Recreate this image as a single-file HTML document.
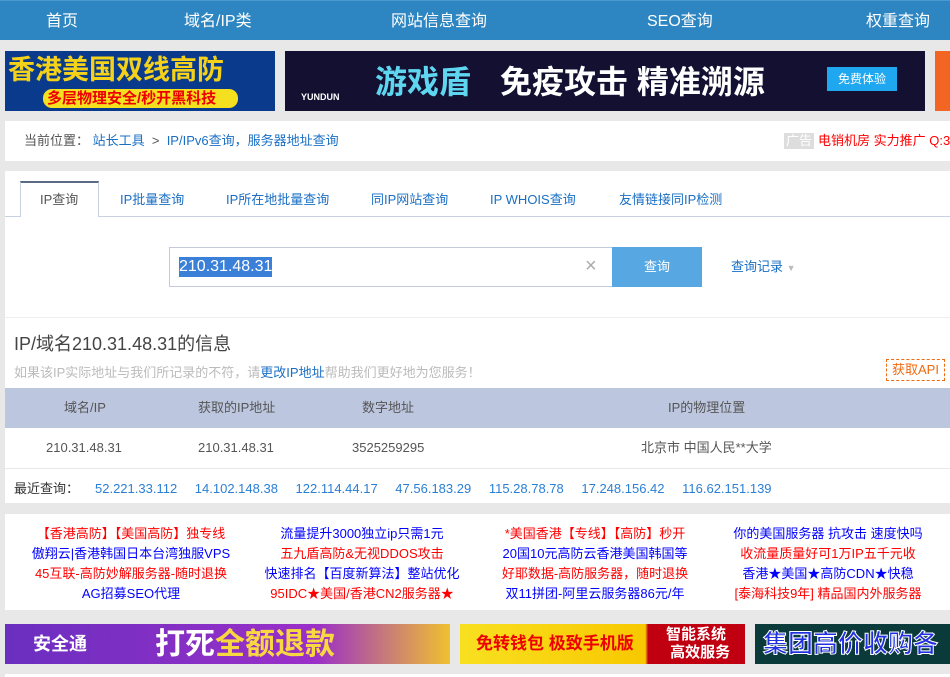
<!DOCTYPE html>
<html><head><meta charset="utf-8"><style>
*{margin:0;padding:0;box-sizing:border-box}
body{width:950px;height:677px;overflow:hidden;background:#e8e8e8;font-family:"Liberation Sans","Noto Sans CJK SC",sans-serif;position:relative;font-size:13px;color:#333;line-height:16px}
.a{position:absolute;white-space:nowrap}
.nav{left:0;top:0;width:950px;height:40px;background:#2d86c1;border-top:1px solid #4a9ad0}
.nav span{position:absolute;top:11px;color:#fff;font-size:16px;line-height:20px}
.w{position:absolute;background:#fff}
.b{color:#1a6fc4}
.tab{position:absolute;top:192px;font-size:13px;color:#1a6fc4}
.adl div{position:absolute;font-size:13px;white-space:nowrap;transform:translateX(-50%)}
.r{color:#f00}.u{color:#00f}
</style></head><body>
<div class="a nav"><span style="left:46px">首页</span><span style="left:184px">域名/IP类</span><span style="left:391px">网站信息查询</span><span style="left:647px">SEO查询</span><span style="left:866px">权重查询</span></div>

<div class="a" style="left:5px;top:51px;width:270px;height:60px;background:#0a3a8c"><div class="a" style="left:3px;top:3px;font-size:27px;line-height:32px;font-weight:bold;color:#f5d21a">香港美国双线高防</div><div class="a" style="left:38px;top:38px;width:195px;height:19px;background:#f5e020;border-radius:9px;color:#e00;font-size:15px;font-weight:bold;padding-left:4px;line-height:19px">多层物理安全/秒开黑科技</div></div>
<div class="a" style="left:285px;top:51px;width:640px;height:60px;background:#141032"><div class="a" style="left:16px;top:38px;color:#fff;font-size:9px;font-weight:bold">YUNDUN</div><div class="a" style="left:90px;top:12px;font-size:32px;line-height:38px;font-weight:bold;color:#5fd6f0">游戏盾</div><div class="a" style="left:215px;top:12px;font-size:32px;line-height:38px;font-weight:bold;color:#fff">免疫攻击 精准溯源</div><div class="a" style="left:542px;top:16px;width:70px;height:24px;background:#1fa8f0;color:#fff;font-size:12px;line-height:24px;text-align:center">免费体验</div></div>
<div class="a" style="left:935px;top:51px;width:15px;height:60px;background:#f26522"></div>

<div class="w" style="left:5px;top:121px;width:945px;height:40px"></div>
<div class="a" style="left:24px;top:133px;color:#555">当前位置： <span class="b">站长工具</span> &nbsp;&gt;&nbsp; <span class="b">IP/IPv6查询，服务器地址查询</span></div>
<div class="a" style="left:784px;top:133px;background:#ddd;color:#fff;padding:0 2px">广告</div>
<div class="a" style="left:818px;top:133px;color:#f00">电销机房 实力推广 Q:3</div>

<div class="w" style="left:5px;top:171px;width:945px;height:332px"></div>
<div class="a" style="left:5px;top:216px;width:945px;height:1px;background:#c9d2e3"></div>
<div class="a" style="left:20px;top:181px;width:79px;height:36px;background:#fff;border:1px solid #c9d2e3;border-top:2px solid #5a6a85;border-bottom:none"></div>
<div class="tab" style="left:40px;color:#555">IP查询</div>
<div class="tab" style="left:120px">IP批量查询</div>
<div class="tab" style="left:226px">IP所在地批量查询</div>
<div class="tab" style="left:371px">同IP网站查询</div>
<div class="tab" style="left:490px">IP WHOIS查询</div>
<div class="tab" style="left:619px">友情链接同IP检测</div>

<div class="a" style="left:169px;top:247px;width:444px;height:40px;border:1px solid #c4cbd8"></div>
<div class="a" style="left:179px;top:257px;font-size:16px;background:#3a7fd8;color:#fff;line-height:20px">210.31.48.31</div>
<div class="a" style="left:585px;top:256px;font-size:20px;line-height:20px;color:#aaa">×</div>
<div class="a" style="left:612px;top:247px;width:90px;height:40px;background:#57a7e2;color:#fff;text-align:center;line-height:40px;font-size:13px">查询</div>
<div class="a" style="left:731px;top:259px;color:#1a6fc4">查询记录 <span style="color:#bbb;font-size:9px">▼</span></div>
<div class="a" style="left:5px;top:317px;width:945px;height:1px;background:#eee"></div>

<div class="a" style="left:14px;top:333px;font-size:18px;line-height:22px;color:#444">IP/域名210.31.48.31的信息</div>
<div class="a" style="left:14px;top:365px;color:#bbb">如果该IP实际地址与我们所记录的不符，请<span class="b">更改IP地址</span>帮助我们更好地为您服务！</div>
<div class="a" style="left:886px;top:359px;width:59px;height:22px;border:1px dashed #f06a10;color:#f06a10;text-align:center;line-height:20px">获取API</div>
<div class="a" style="left:5px;top:388px;width:945px;height:40px;background:#bcc6de"></div>
<div class="a" style="left:64px;top:400px;color:#555">域名/IP</div>
<div class="a" style="left:198px;top:400px;color:#555">获取的IP地址</div>
<div class="a" style="left:362px;top:400px;color:#555">数字地址</div>
<div class="a" style="left:668px;top:400px;color:#555">IP的物理位置</div>
<div class="a" style="left:46px;top:440px;color:#555">210.31.48.31</div>
<div class="a" style="left:198px;top:440px;color:#555">210.31.48.31</div>
<div class="a" style="left:352px;top:440px;color:#555">3525259295</div>
<div class="a" style="left:641px;top:440px;color:#555">北京市 中国人民**大学</div>
<div class="a" style="left:5px;top:468px;width:945px;height:1px;background:#e8e8e8"></div>
<div class="a" style="left:14px;top:481px;color:#333">最近查询：</div>
<div class="a" style="left:95px;top:481px;color:#2a7fd4;word-spacing:14px">52.221.33.112 14.102.148.38 122.114.44.17 47.56.183.29 115.28.78.78 17.248.156.42 116.62.151.139</div>

<div class="w" style="left:5px;top:514px;width:945px;height:96px"></div>
<div class="adl">
<div class="r" style="left:131px;top:526px">【香港高防】【美国高防】独专线</div>
<div class="u" style="left:131px;top:546px">傲翔云|香港韩国日本台湾独服VPS</div>
<div class="r" style="left:131px;top:566px">45互联-高防妙解服务器-随时退换</div>
<div class="u" style="left:131px;top:586px">AG招募SEO代理</div>
<div class="u" style="left:362px;top:526px">流量提升3000独立ip只需1元</div>
<div class="r" style="left:362px;top:546px">五九盾高防&amp;无视DDOS攻击</div>
<div class="u" style="left:362px;top:566px">快速排名【百度新算法】整站优化</div>
<div class="r" style="left:362px;top:586px">95IDC★美国/香港CN2服务器★</div>
<div class="r" style="left:595px;top:526px">*美国香港【专线】【高防】秒开</div>
<div class="u" style="left:595px;top:546px">20国10元高防云香港美国韩国等</div>
<div class="r" style="left:595px;top:566px">好耶数据-高防服务器，随时退换</div>
<div class="u" style="left:595px;top:586px">双11拼团-阿里云服务器86元/年</div>
<div class="u" style="left:828px;top:526px">你的美国服务器 抗攻击 速度快吗</div>
<div class="r" style="left:828px;top:546px">收流量质量好可1万IP五千元收</div>
<div class="u" style="left:828px;top:566px">香港★美国★高防CDN★快稳</div>
<div class="r" style="left:828px;top:586px">[泰海科技9年] 精品国内外服务器</div>
</div>

<div class="a" style="left:5px;top:624px;width:445px;height:40px;background:linear-gradient(90deg,#6a2fc0,#9b2fc8 70%,#f0c030)"><div class="a" style="left:28px;top:10px;color:#fff;font-size:18px;line-height:20px;font-weight:bold">安全通</div><div class="a" style="left:150px;top:4px;color:#fff;font-size:30px;line-height:34px;font-weight:bold">打死<span style="color:#f8d840">全额退款</span></div></div>
<div class="a" style="left:460px;top:624px;width:285px;height:40px;background:linear-gradient(90deg,#f8e020,#f8c800 65%,#c00010 66%)"><div class="a" style="left:16px;top:10px;color:#e00;font-size:17px;line-height:20px;font-weight:bold">免转钱包 极致手机版</div><div class="a" style="left:206px;top:2px;color:#fff;font-size:15px;font-weight:bold;line-height:18px">智能系统<br>&nbsp;高效服务</div></div>
<div class="a" style="left:755px;top:624px;width:195px;height:40px;background:#0a3a3a"><div class="a" style="left:8px;top:6px;color:#2030e0;font-size:25px;line-height:28px;font-weight:bold;-webkit-text-stroke:1px #fff">集团高价收购各</div></div>
<div class="w" style="left:5px;top:674px;width:945px;height:3px"></div>
</body></html>
